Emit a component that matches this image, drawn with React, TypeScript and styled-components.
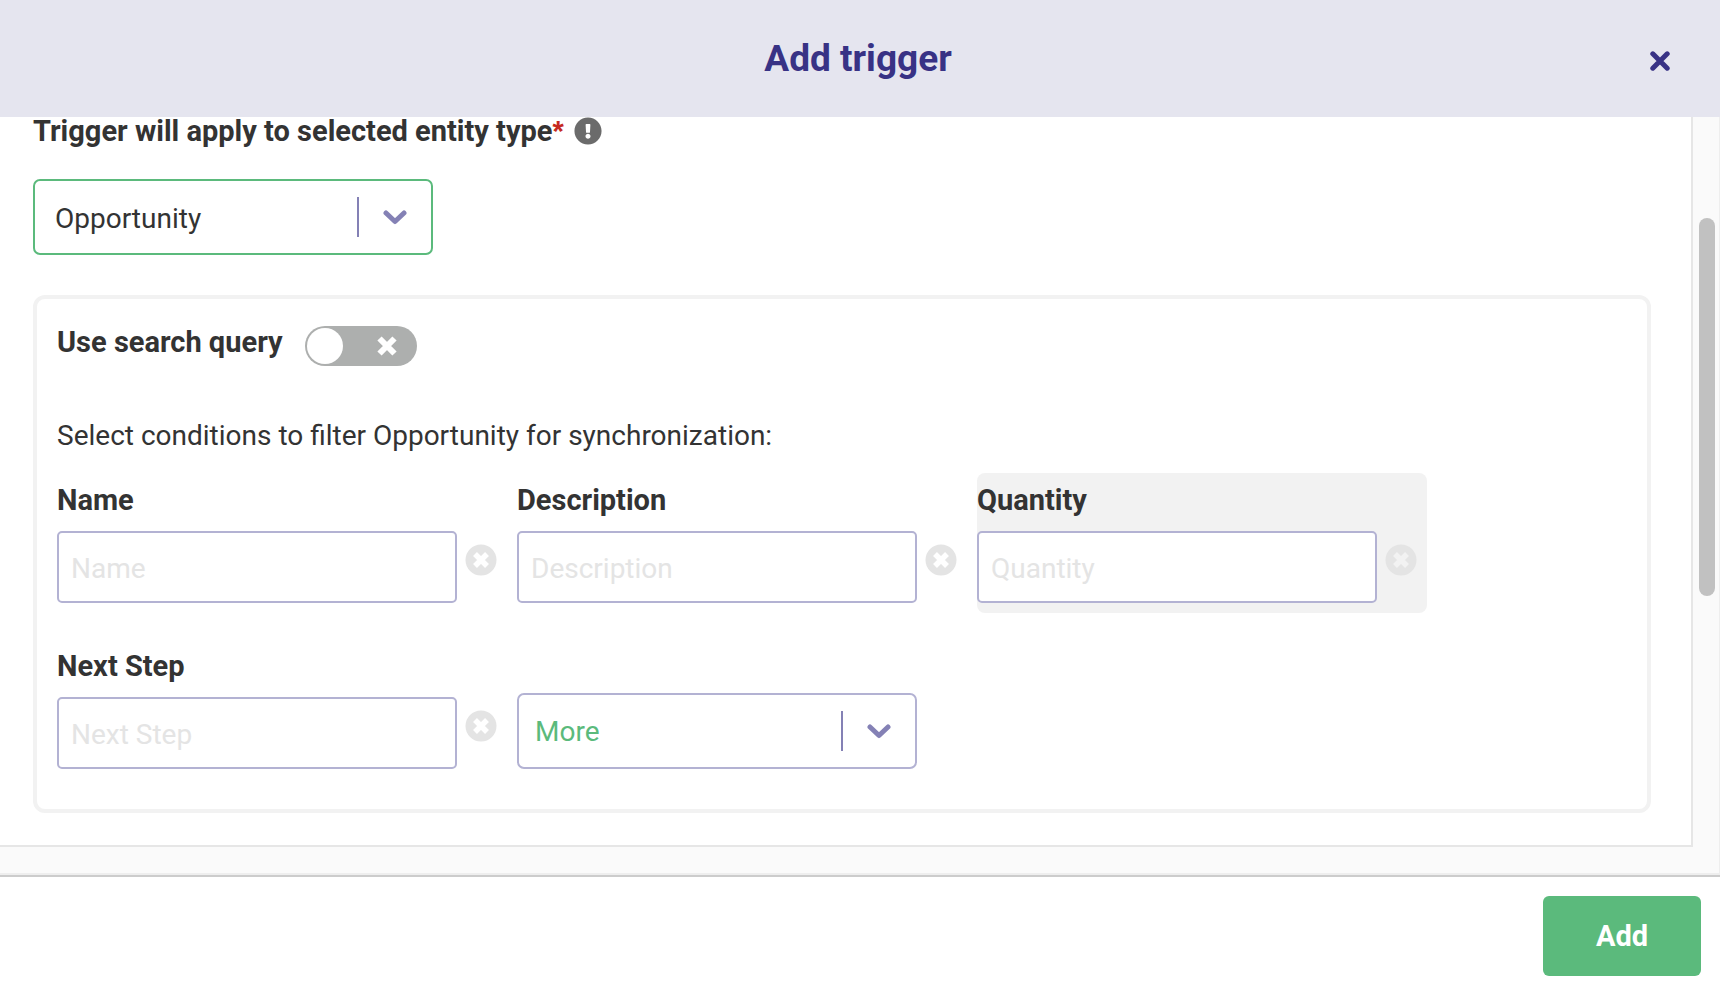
import React from 'react';
import styled, { createGlobalStyle, css } from 'styled-components';
import { FaExclamationCircle } from 'react-icons/fa';

const GlobalStyle = createGlobalStyle`
  *, *::before, *::after { box-sizing: border-box; }
  body {
    margin: 0;
    background: #ffffff;
    color: #333333;
    font-family: Roboto, "Liberation Sans", sans-serif;
    font-size: 28px;
    line-height: 40px;
  }
  button, input, select { font: inherit; color: inherit; }
`;

const Dialog = styled.div`
  display: flex;
  flex-direction: column;
  min-height: 100vh;
`;

const Header = styled.header`
  display: grid;
  grid-template-columns: 1fr auto 1fr;
  align-items: center;
  height: 117px;
  padding: 0 50px 0 46px;
  background: #e5e5ef;
  color: #383285;
`;

const Title = styled.h1`
  grid-column: 2;
  margin: 0;
  font-size: 37px;
  line-height: 44px;
`;

const IconButton = styled.button`
  display: flex;
  flex: none;
  padding: 0;
  border: 0;
  background: none;
  cursor: pointer;
`;

const CloseButton = styled(IconButton)`
  justify-self: end;
  margin-top: 4px;
`;

const Body = styled.main`
  display: flex;
  flex: 1;
  background: #fafafa;
  border-bottom: 2px solid #eeeeee;
`;

const Content = styled.section`
  flex: 1;
  min-width: 0;
  margin-bottom: 26px;
  padding: 0 40px 32px 33px;
  background: #ffffff;
  border: solid #e6e6e6;
  border-width: 0 2px 2px 0;
`;

const Scrollbar = styled.div`
  display: grid;
  grid-template-rows: 101fr 378fr 277fr;
  width: 27px;
  padding: 0 4px 0 6px;
  border-right: 1px solid #eeeeee;
`;

const Thumb = styled.div`
  grid-row: 2;
  border-radius: 8px;
  background: #c1c1c1;
`;

const boldText = css`
  font-size: 29px;
  font-weight: 700;
`;

const EntityLabel = styled.div`
  ${boldText}
  display: flex;
  align-items: center;
  gap: 10px;
  height: 28px;
  margin-bottom: 34px;
  line-height: 28px;

  svg { color: #6b6b6b; }
`;

const Required = styled.span`
  color: #c52a21;
  font-family: "Liberation Sans", sans-serif;
`;

const SelectBox = styled.div<{ $accent?: boolean }>`
  display: grid;
  width: 400px;
  height: 76px;
  border: 2px solid ${(p) => (p.$accent ? '#5bba7c' : '#b3b2d3')};
  border-radius: 7px;
  background: #ffffff;

  > * { grid-area: 1 / 1; }
`;

const Select = styled.select<{ $green?: boolean }>`
  appearance: none;
  width: 100%;
  padding: ${(p) => (p.$green ? '2px 80px 0 16px' : '4px 80px 0 20px')};
  border: 0;
  border-radius: 6px;
  background: none;
  color: ${(p) => (p.$green ? '#5bba7c' : '#333333')};
`;

const Indicator = styled.span`
  display: flex;
  align-items: center;
  align-self: center;
  justify-self: end;
  height: 40px;
  padding: 0 24px;
  border-left: 2px solid #8481b5;
  pointer-events: none;
`;

const Filters = styled.div`
  margin-top: 40px;
  padding: 23px 20px 30px;
  border: 4px solid #f2f2f2;
  border-radius: 12px;
`;

const ToggleRow = styled.label`
  ${boldText}
  display: flex;
  align-items: flex-start;
  gap: 22px;
  width: max-content;
`;

const Switch = styled.span`
  display: grid;
  align-items: center;
  width: 112px;
  height: 40px;
  margin-top: 4px;
  border-radius: 20px;
  background: #adafae;

  > * { grid-area: 1 / 1; }
  svg { justify-self: end; margin-right: 20px; }
`;

const SwitchInput = styled.input`
  appearance: none;
  width: 36px;
  height: 36px;
  margin: 0 2px;
  border-radius: 50%;
  background: #ffffff;
  cursor: pointer;
`;

const Hint = styled.p`
  margin: 50px 0 17px;
`;

const Fields = styled.div`
  display: grid;
  grid-template-columns: repeat(auto-fill, 450px);
  gap: 26px 10px;
`;

const Field = styled.div<{ $active?: boolean }>`
  padding: 7px 0 10px;
  border-radius: 8px;
  background: ${(p) => (p.$active ? '#f2f2f2' : 'none')};
`;

const MoreField = styled.div`
  align-self: end;
  padding-bottom: 10px;
`;

const FieldLabel = styled.label`
  ${boldText}
  display: block;
  margin-bottom: 11px;
`;

const FieldRow = styled.div`
  display: flex;
  align-items: flex-start;
  gap: 8px;
`;

const TextInput = styled.input`
  width: 400px;
  height: 72px;
  padding: 3px 12px 0;
  border: 2px solid #b3b2d3;
  border-radius: 5px;
  background: #ffffff;

  &::placeholder { color: #e4e4e4; opacity: 1; }
`;

const ClearButton = styled(IconButton)`
  margin-top: 13px;
`;

const Footer = styled.footer`
  display: flex;
  justify-content: flex-end;
  padding: 19px 19px 18px;
  border-top: 2px solid #cccccc;
`;

const AddButton = styled.button`
  ${boldText}
  width: 158px;
  height: 80px;
  border: 0;
  border-radius: 6px;
  background: #5bba7c;
  color: #ffffff;
  cursor: pointer;
`;

const Chevron = () => (
  <svg width="24" height="16" viewBox="0 0 24 16" fill="none" stroke="#8481b5" strokeWidth="5" strokeLinecap="round" strokeLinejoin="round" aria-hidden="true">
    <path d="M3 4 12 12.500 21 4" />
  </svg>
);

const CloseIcon = () => (
  <svg width="20" height="20" viewBox="0 0 20 20" fill="none" stroke="#383285" strokeWidth="5" strokeLinecap="round" aria-hidden="true">
    <path d="M2.800 2.800 17.200 17.200M17.200 2.800 2.800 17.200" />
  </svg>
);

const CrossIcon = () => (
  <svg width="20" height="20" viewBox="0 0 20 20" fill="none" stroke="#ffffff" strokeWidth="6" aria-hidden="true">
    <path d="M2.500 2.500 17.500 17.500M17.500 2.500 2.500 17.500" />
  </svg>
);

const ClearIcon = ({ id }: { id: string }) => (
  <svg width="32" height="32" viewBox="0 0 32 32" aria-hidden="true">
    <mask id={id}>
      <rect width="32" height="32" fill="#ffffff" />
      <path d="M10 10 22 22M22 10 10 22" stroke="#000000" strokeWidth="5.500" />
    </mask>
    <circle cx="16" cy="16" r="15.500" fill="#e4e4e4" mask={`url(#${id})`} />
  </svg>
);

const fields = [
  { id: 'name', label: 'Name' },
  { id: 'description', label: 'Description' },
  { id: 'quantity', label: 'Quantity', active: true },
  { id: 'next-step', label: 'Next Step' },
];

export default function App() {
  return (
    <>
      <GlobalStyle />
      <Dialog role="dialog" aria-labelledby="dialog-title">
        <Header>
          <Title id="dialog-title">Add trigger</Title>
          <CloseButton type="button" aria-label="Close">
            <CloseIcon />
          </CloseButton>
        </Header>
        <Body>
          <Content>
            <EntityLabel>
              <label htmlFor="entity">
                Trigger will apply to selected entity type<Required>*</Required>
              </label>
              <FaExclamationCircle size={28} />
            </EntityLabel>
            <SelectBox $accent>
              <Select id="entity">
                <option>Opportunity</option>
              </Select>
              <Indicator>
                <Chevron />
              </Indicator>
            </SelectBox>
            <Filters>
              <ToggleRow>
                Use search query
                <Switch>
                  <CrossIcon />
                  <SwitchInput type="checkbox" role="switch" />
                </Switch>
              </ToggleRow>
              <Hint>Select conditions to filter Opportunity for synchronization:</Hint>
              <Fields>
                {fields.map((f) => (
                  <Field key={f.id} $active={f.active}>
                    <FieldLabel htmlFor={f.id}>{f.label}</FieldLabel>
                    <FieldRow>
                      <TextInput id={f.id} type="text" placeholder={f.label} />
                      <ClearButton type="button" aria-label={`Remove ${f.label}`}>
                        <ClearIcon id={`cross-${f.id}`} />
                      </ClearButton>
                    </FieldRow>
                  </Field>
                ))}
                <MoreField>
                  <SelectBox>
                    <Select $green aria-label="More conditions">
                      <option>More</option>
                    </Select>
                    <Indicator>
                      <Chevron />
                    </Indicator>
                  </SelectBox>
                </MoreField>
              </Fields>
            </Filters>
          </Content>
          <Scrollbar>
            <Thumb />
          </Scrollbar>
        </Body>
        <Footer>
          <AddButton type="button">Add</AddButton>
        </Footer>
      </Dialog>
    </>
  );
}
